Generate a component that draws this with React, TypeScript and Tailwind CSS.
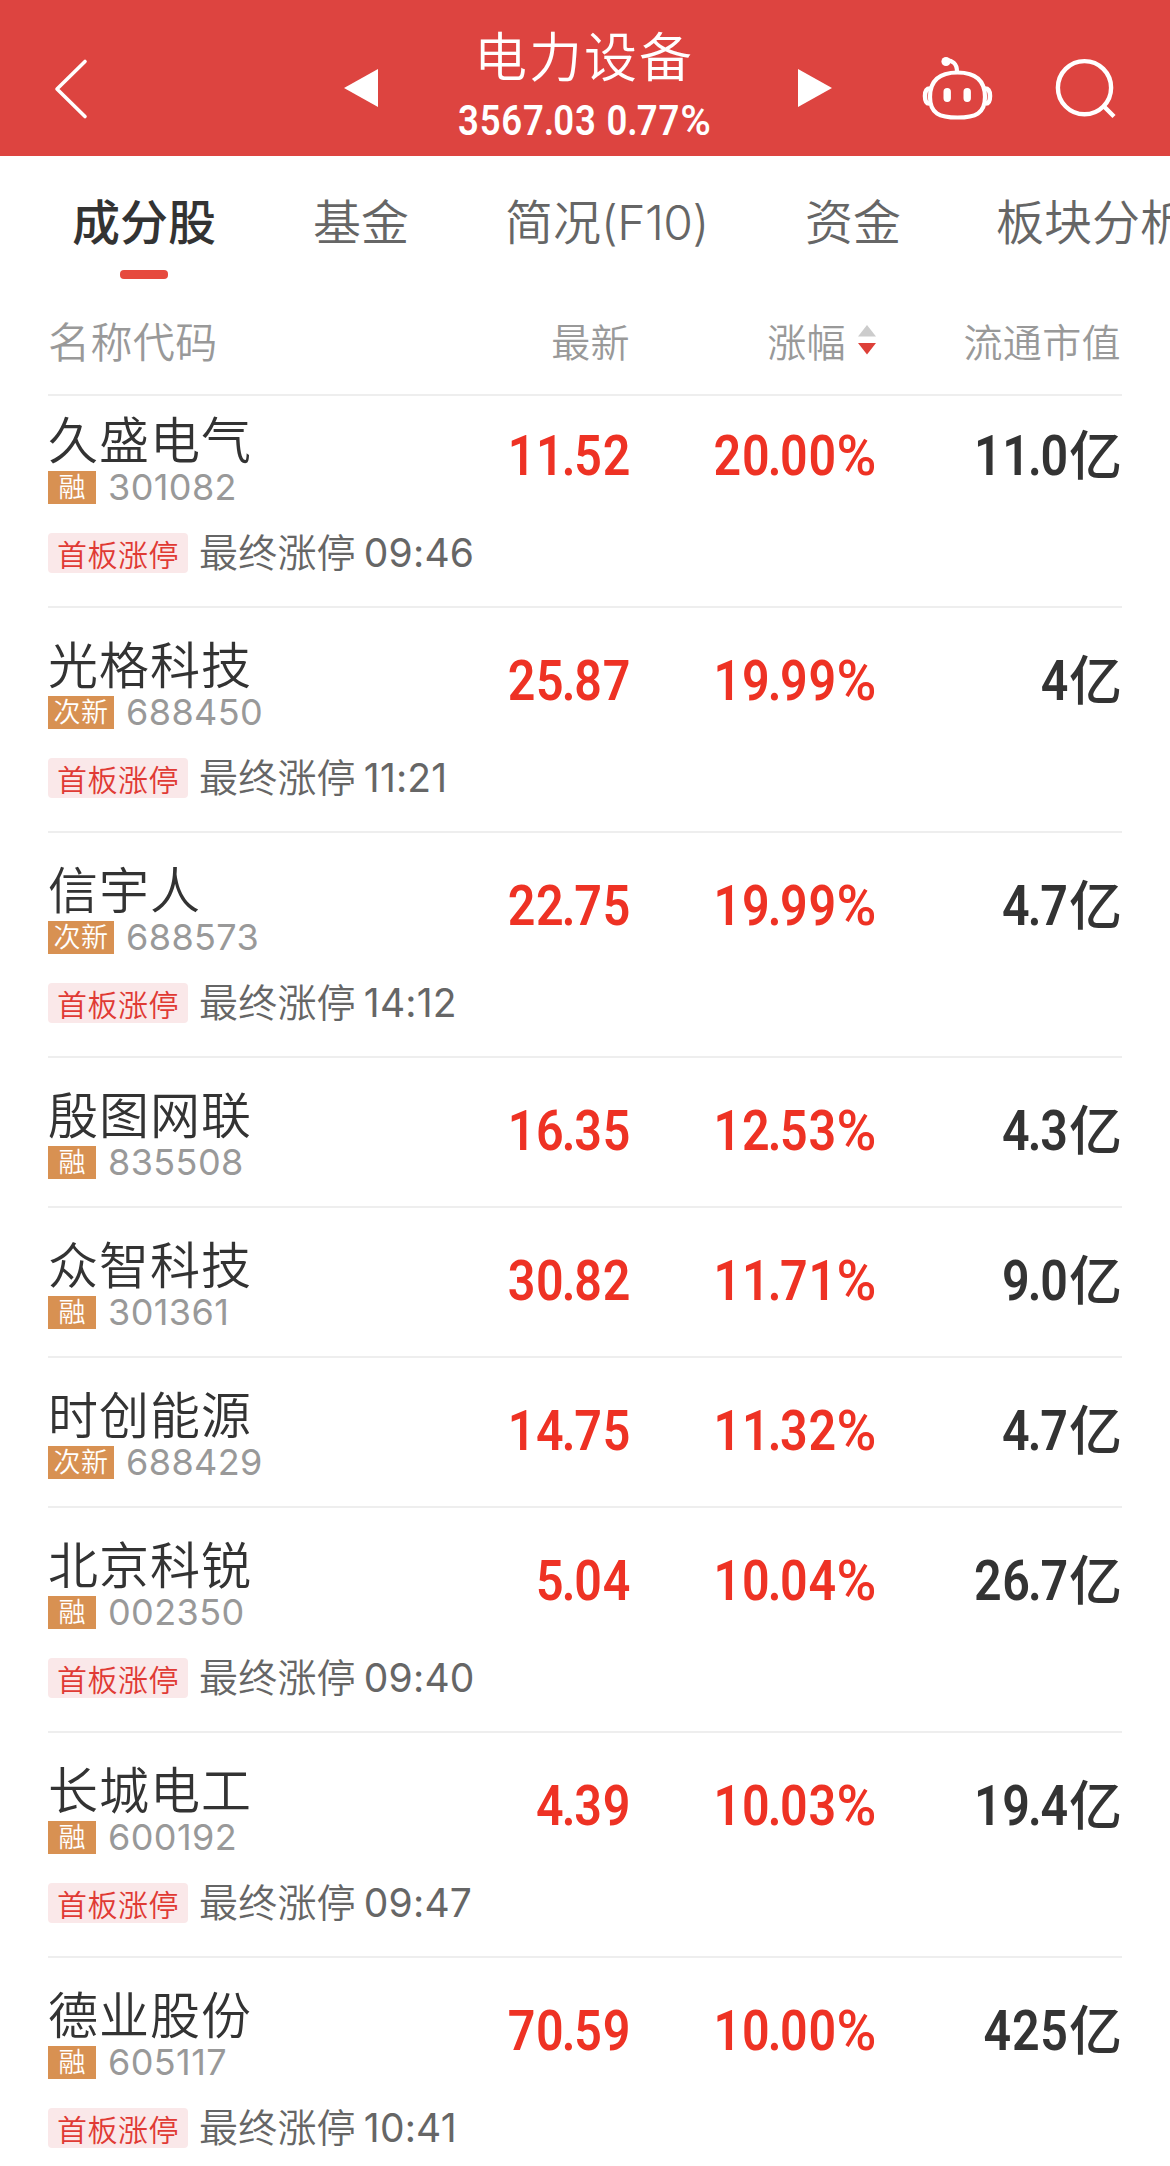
import clsx from "clsx";

type Stock = {
    name: string;
    badge: string;
    code: string;
    price: string;
    change: string;
    cap: string;
    time?: string;
};

const TABS = [
    { label: "成分股", width: "w-[241px]" },
    { label: "基金", width: "w-[192px]" },
    { label: "简况", suffix: "(F10)", width: "w-[300px]" },
    { label: "资金", width: "w-[191px]" },
    { label: "板块分析", width: "w-[192px]" },
];

const STOCKS: Stock[] = [
    { name: "久盛电气", badge: "融", code: "301082", price: "11.52", change: "20.00%", cap: "11.0", time: "09:46" },
    { name: "光格科技", badge: "次新", code: "688450", price: "25.87", change: "19.99%", cap: "4", time: "11:21" },
    { name: "信宇人", badge: "次新", code: "688573", price: "22.75", change: "19.99%", cap: "4.7", time: "14:12" },
    { name: "殷图网联", badge: "融", code: "835508", price: "16.35", change: "12.53%", cap: "4.3" },
    { name: "众智科技", badge: "融", code: "301361", price: "30.82", change: "11.71%", cap: "9.0" },
    { name: "时创能源", badge: "次新", code: "688429", price: "14.75", change: "11.32%", cap: "4.7" },
    { name: "北京科锐", badge: "融", code: "002350", price: "5.04", change: "10.04%", cap: "26.7", time: "09:40" },
    { name: "长城电工", badge: "融", code: "600192", price: "4.39", change: "10.03%", cap: "19.4", time: "09:47" },
    { name: "德业股份", badge: "融", code: "605117", price: "70.59", change: "10.00%", cap: "425", time: "10:41" },
];

// Condensed figures with a tight decimal point and a wide, lighter percent sign
const Figure = ({ value, className }: { value: string; className?: string }) => {
    const percent = value.endsWith("%");
    const [whole, fraction] = value.replace("%", "").split(".");

    return (
        <div className={clsx("origin-right scale-x-[0.88] font-['Roboto'] text-[55px] leading-[66px] font-semibold tracking-[0.8px]", className)}>
            {whole}
            {fraction && <span className="-ml-[3px] tracking-[-1.5px]">.</span>}
            {fraction}
            {percent && <span className="ml-[4px] inline-block origin-right scale-x-[1.12] font-medium tracking-normal">%</span>}
        </div>
    );
};

const Header = () => {
    return (
        <header className="flex h-[156px] shrink-0 bg-[#dd4440] pl-[54px] text-white">
            <svg className="h-[156px] w-[34px]" viewBox="54 0 34 156" fill="none" stroke="currentColor" strokeWidth="3.6" strokeLinecap="round" strokeLinejoin="round">
                <path d="M85 61.5 57 89l28 27.5" />
            </svg>
            <svg className="ml-[256px] h-[156px] w-[34px]" viewBox="344 0 34 156" fill="currentColor">
                <path d="M378 69v38l-34-19z" />
            </svg>
            <div className="mr-[6px] flex w-[414px] flex-col items-center">
                <h1 className="mt-[24px] pr-[2px] text-[53px] leading-[60px] font-[350] tracking-[2px]">电力设备</h1>
                <p className="origin-center scale-x-[0.87] pt-[4px] font-['Roboto'] text-[42px] leading-[66px] font-semibold tracking-[0.9px] whitespace-nowrap">
                    3567<span className="-ml-[1px] tracking-[-1px]">.</span>03 0<span className="-ml-[1px] tracking-[-1px]">.</span>77
                    <span className="ml-[5px] inline-block origin-right scale-x-[1.14] font-medium">%</span>
                </p>
            </div>
            <svg className="h-[156px] w-[34px]" viewBox="798 0 34 156" fill="currentColor">
                <path d="M798 69v38l34-19z" />
            </svg>
            <svg className="ml-[90px] h-[156px] w-[71px]" viewBox="922 0 71 156" fill="none" stroke="currentColor" strokeWidth="4.2">
                <path d="M957.5 72.5c18 0 27.500 8 27.500 24.500s-9.500 20.500-27.500 20.500S930 113.500 930 97s9.500-24.500 27.500-24.500Z" />
                <path d="M946 60.500c6-.5 11 3 11 11" />
                <circle cx="946" cy="61.500" r="4.600" fill="currentColor" stroke="none" />
                <path d="M930 88.500c-3.500 0-5 2.500-5 7.500s1.500 7.500 4 7.500M985 88.500c3.500 0 5 2.500 5 7.500s-1.500 7.500-4 7.500" strokeWidth="4.500" />
                <path d="M947.200 91.700v6.600M967.200 91.700v6.600" strokeWidth="7.400" strokeLinecap="round" />
            </svg>
            <svg className="ml-[61px] h-[156px] w-[63px]" viewBox="1054 0 63 156" fill="none" stroke="currentColor" strokeWidth="4.4">
                <circle cx="1084.500" cy="87.700" r="26.600" />
                <path d="m1103.500 106 10.500 10.500" />
            </svg>
        </header>
    );
};

const Tabs = () => {
    return (
        <nav className="flex h-[134px] shrink-0 overflow-hidden pl-[72px] text-[48px] leading-[60px] text-[#666]">
            {TABS.map((tab, index) => (
                <div key={tab.label} className={clsx("shrink-0 pt-[33px] whitespace-nowrap", tab.width)}>
                    <span className={clsx(index === 0 ? "font-medium text-[#333]" : "font-[350]")}>
                        {tab.label}
                        {tab.suffix && <span className="font-['Inter'] tracking-[-0.5px]">{tab.suffix}</span>}
                    </span>
                    {index === 0 && <div className="mt-[21px] ml-[48px] h-[9px] w-[48px] rounded-[4px] bg-[#e64a3e]" />}
                </div>
            ))}
        </nav>
    );
};

const TableHead = () => {
    return (
        <div className="mx-12 flex h-[106px] shrink-0 items-center border-b-2 border-[#eee] pb-[4px] text-[39px] leading-[50px] font-[350] tracking-[0.4px] text-[#999]">
            <div className="w-[300px] text-[42px]">名称代码</div>
            <div className="w-[282px] text-right">最新</div>
            <div className="flex w-[246px] items-center justify-end gap-[12px]">
                涨幅
                <svg className="h-[32px] w-[18px]" viewBox="0 0 18 32">
                    <path d="M9 1l9 11.500H0z" fill="#ccc" />
                    <path d="M9 30.500 0 19h18z" fill="#dd4038" />
                </svg>
            </div>
            <div className="w-[245px] text-right">流通市值</div>
        </div>
    );
};

const StockRow = ({ stock, first }: { stock: Stock; first: boolean }) => {
    return (
        <div
            className={clsx(
                "shrink-0 border-b-2 border-[#eee]",
                stock.time ? (first ? "h-[212px] pt-[11px]" : "h-[225px] pt-[24px]") : "h-[150px] pt-[24px]",
            )}
        >
            <div className="flex h-[97px]">
                <div className="w-[300px]">
                    <div className="h-[64px] text-[50px] leading-[60px] font-[350] tracking-[1px] text-[#333]">{stock.name}</div>
                    <div className="flex h-[33px] items-center">
                        <span
                            className={clsx(
                                "h-[33px] bg-[#d89152] text-center text-[27px] leading-[29px] font-[350] text-white",
                                stock.badge.length > 1 ? "w-[66px] tracking-[0.5px]" : "w-[48px]",
                            )}
                        >
                            {stock.badge}
                        </span>
                        <span className="ml-[12px] font-['Inter'] text-[36px] leading-[35px] tracking-[0.4px] text-[#999]">{stock.code}</span>
                    </div>
                </div>
                <Figure value={stock.price} className="w-[283px] pt-[16px] text-right text-[#ee3224]" />
                <Figure value={stock.change} className="w-[245px] pt-[16px] text-right text-[#ee3224]" />
                <div className="flex w-[246px] justify-end text-[#333]">
                    <Figure value={stock.cap} className="pt-[16px]" />
                    <span className="pt-[12px] text-[53px] leading-[66px] font-medium">亿</span>
                </div>
            </div>
            {stock.time && (
                <div className="mt-[29px] flex h-[40px] items-center">
                    <span className="h-[40px] w-[140px] rounded-[4px] bg-[#fae8e9] text-center text-[30px] leading-[41px] font-[350] tracking-[0.5px] text-[#e03a34]">
                        首板涨停
                    </span>
                    <span className="ml-[11px] pb-[7px] text-[39px] leading-[40px] font-[350] tracking-[0.2px] text-[#666]">最终涨停</span>
                    <span className="ml-[8px] font-['Inter'] text-[39px] leading-[40px] tracking-[0.2px] text-[#666]">{stock.time}</span>
                </div>
            )}
        </div>
    );
};

const App = () => {
    return (
        <div className="flex h-[2166px] w-[1170px] flex-col overflow-hidden bg-white font-['Noto_Sans_CJK_SC',sans-serif]">
            <Header />
            <Tabs />
            <TableHead />
            <main className="mx-12">
                {STOCKS.map((stock, index) => (
                    <StockRow key={stock.code} stock={stock} first={index === 0} />
                ))}
            </main>
        </div>
    );
};

export default App;
